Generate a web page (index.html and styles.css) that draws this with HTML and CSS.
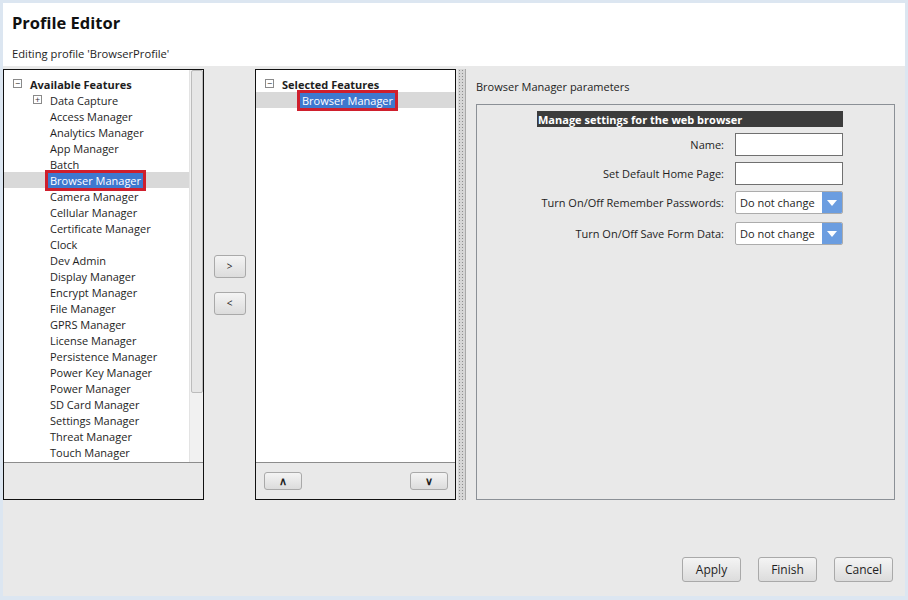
FILE: index.html
```html
<!DOCTYPE html>
<html lang="en">
<head>
    <meta charset="UTF-8">
    <title>Profile Editor</title>
    <link rel="stylesheet" href="styles.css">
</head>
<body>

    <div class="window">
        <header class="editor-header">
            <h1>Profile Editor</h1>
            <p>Editing profile 'BrowserProfile'</p>
        </header>

        <main class="editor-body">
            <div class="panes">

                <section class="tree-pane">
                    <div class="tree-area">
                        <ul class="tree">
                            <li class="tree-root"><span class="toggle">&minus;</span>Available Features</li>
                            <li class="tree-item has-children"><span class="toggle">+</span>Data Capture</li>
                            <li class="tree-item">Access Manager</li>
                            <li class="tree-item">Analytics Manager</li>
                            <li class="tree-item">App Manager</li>
                            <li class="tree-item">Batch</li>
                            <li class="tree-item selected"><span class="hilite">Browser Manager</span></li>
                            <li class="tree-item">Camera Manager</li>
                            <li class="tree-item">Cellular Manager</li>
                            <li class="tree-item">Certificate Manager</li>
                            <li class="tree-item">Clock</li>
                            <li class="tree-item">Dev Admin</li>
                            <li class="tree-item">Display Manager</li>
                            <li class="tree-item">Encrypt Manager</li>
                            <li class="tree-item">File Manager</li>
                            <li class="tree-item">GPRS Manager</li>
                            <li class="tree-item">License Manager</li>
                            <li class="tree-item">Persistence Manager</li>
                            <li class="tree-item">Power Key Manager</li>
                            <li class="tree-item">Power Manager</li>
                            <li class="tree-item">SD Card Manager</li>
                            <li class="tree-item">Settings Manager</li>
                            <li class="tree-item">Threat Manager</li>
                            <li class="tree-item">Touch Manager</li>
                        </ul>
                        <div class="scrollbar"><div class="scroll-thumb"></div></div>
                    </div>
                    <div class="tree-footer"></div>
                </section>

                <div class="move-buttons">
                    <button class="btn move-btn">&gt;</button>
                    <button class="btn move-btn">&lt;</button>
                </div>

                <section class="tree-pane">
                    <div class="tree-area">
                        <ul class="tree">
                            <li class="tree-root"><span class="toggle">&minus;</span>Selected Features</li>
                            <li class="tree-item selected"><span class="hilite">Browser Manager</span></li>
                        </ul>
                    </div>
                    <div class="tree-footer order-bar">
                        <button class="btn order-btn">&and;</button>
                        <button class="btn order-btn">&or;</button>
                    </div>
                </section>

                <div class="splitter"></div>

                <section class="params">
                    <div class="params-title">Browser Manager parameters</div>
                    <div class="group-box">
                        <div class="param-form">
                            <div class="form-heading">Manage settings for the web browser</div>
                            <div class="form-row">
                                <label>Name:</label>
                                <input type="text" class="text-input">
                            </div>
                            <div class="form-row">
                                <label>Set Default Home Page:</label>
                                <input type="text" class="text-input">
                            </div>
                            <div class="form-row">
                                <label>Turn On/Off Remember Passwords:</label>
                                <div class="combo"><span>Do not change</span><span class="combo-arrow"></span></div>
                            </div>
                            <div class="form-row spaced">
                                <label>Turn On/Off Save Form Data:</label>
                                <div class="combo"><span>Do not change</span><span class="combo-arrow"></span></div>
                            </div>
                        </div>
                    </div>
                </section>

            </div>

            <footer class="actions">
                <button class="btn action-btn">Apply</button>
                <button class="btn action-btn">Finish</button>
                <button class="btn action-btn">Cancel</button>
            </footer>
        </main>
    </div>

</body>
</html>
```

FILE: styles.css
```css
body {
    margin: 0;
    background-color: #dce6f1;
    font-family: 'Open Sans', 'Noto Sans', sans-serif;
    font-size: 11px;
    color: #1e1e1e;
}

.window {
    margin: 3px 3px 4px 3px;
    height: 593px;
    display: flex;
    flex-direction: column;
}

.editor-header {
    background-color: #fff;
    height: 63px;
    padding-left: 9px;
    box-sizing: border-box;
}

.editor-header h1 {
    margin: 0;
    padding-top: 9px;
    font-size: 16.5px;
    line-height: 22px;
    font-weight: bold;
    color: #111;
}

.editor-header p {
    margin: 0;
    padding-top: 12px;
    line-height: 16px;
    font-size: 11.2px;
}

.editor-body {
    flex: 1;
    background-color: #e9e9e9;
}

.panes {
    display: flex;
    padding-top: 3px;
    height: 431px;
}

/* feature trees */

.tree-pane {
    width: 201px;
    border: 1px solid #111;
    box-sizing: border-box;
    display: flex;
    flex-direction: column;
    background-color: #e9e9e9;
}

.tree-area {
    height: 392px;
    background-color: #fff;
    border-bottom: 1px solid #8c8c8c;
    display: flex;
}

.tree {
    list-style-type: none;
    margin: 0;
    padding: 6px 0 0 0;
    flex: 1;
    overflow: hidden;
}

.tree li {
    height: 16px;
    line-height: 17px;
    white-space: nowrap;
    position: relative;
}

.tree-root {
    padding-left: 26px;
    font-weight: bold;
}

.tree-item {
    padding-left: 46px;
}

.toggle {
    position: absolute;
    top: 3px;
    width: 7px;
    height: 7px;
    border: 1px solid #8a8a8a;
    font-size: 9px;
    line-height: 7px;
    text-align: center;
    font-weight: normal;
    color: #333;
}

.tree-root .toggle {
    left: 9px;
}

.has-children .toggle {
    left: 29px;
}

.tree-item.selected {
    background-color: #d9d9d9;
}

.hilite {
    background-color: #3e78cf;
    color: #fff;
    margin-left: -2px;
    padding: 0 2px;
    outline: 3px solid #cf1f2d;
}

.scrollbar {
    width: 12px;
    background-color: #f1f1f1;
    border-left: 1px solid #e3e3e3;
    padding: 0 0 0 1px;
}

.scroll-thumb {
    height: 323px;
    background-color: #e6e6e6;
    border: 1px solid #bcbcbc;
    border-radius: 2px;
    box-sizing: border-box;
}

.tree-footer {
    flex: 1;
}

.order-bar {
    display: flex;
    justify-content: space-between;
    padding: 9px 7px 0 8px;
}

/* buttons */

.btn {
    font-family: 'Open Sans', 'Noto Sans', sans-serif;
    font-size: 11px;
    color: #1e1e1e;
    background: linear-gradient(#f4f4f4, #dcdcdc);
    border: 1px solid #a9a9a9;
    border-radius: 3px;
    padding: 0;
    cursor: pointer;
}

.move-buttons {
    width: 51px;
    display: flex;
    flex-direction: column;
    align-items: center;
    justify-content: center;
    gap: 14px;
}

.move-btn {
    width: 32px;
    height: 23px;
    font-size: 10px;
}

.order-btn {
    width: 38px;
    height: 18px;
    font-size: 11px;
    font-weight: bold;
    line-height: 14px;
}

.splitter {
    width: 7px;
    margin-left: 2px;
    border-right: 1px solid #a9a9a9;
    background-color: #d6d6d6;
    background-image: radial-gradient(#8d8d8d 0.7px, transparent 1px);
    background-size: 3px 3px;
}

/* parameters */

.params {
    flex: 1;
    padding: 0 10px 0 10px;
    display: flex;
    flex-direction: column;
}

.params-title {
    height: 35px;
    line-height: 36px;
}

.group-box {
    flex: 1;
    border: 1px solid #8b9096;
}

.param-form {
    width: 306px;
    margin: 6px 0 0 60px;
    display: flex;
    flex-direction: column;
    gap: 6px;
}

.form-heading {
    background-color: #3c3c3c;
    color: #fff;
    font-weight: bold;
    height: 16px;
    line-height: 17px;
    padding-left: 1px;
}

.form-row {
    display: flex;
    align-items: center;
    gap: 11px;
    height: 23px;
}

.form-row.spaced {
    margin-top: 2px;
}

.form-row label {
    width: 187px;
    text-align: right;
    white-space: nowrap;
}

.text-input {
    width: 108px;
    height: 23px;
    box-sizing: border-box;
    border: 1px solid #707070;
    background-color: #fff;
    margin: 0;
}

.combo {
    width: 108px;
    height: 23px;
    box-sizing: border-box;
    display: flex;
    align-items: center;
    justify-content: space-between;
    background-color: #fff;
    border: 1px solid #acacac;
    border-radius: 2px;
    padding-left: 4px;
    overflow: hidden;
}

.combo-arrow {
    width: 20px;
    height: 100%;
    background-color: #6b9de0;
    display: flex;
    align-items: center;
    justify-content: center;
}

.combo-arrow::after {
    content: "";
    border-left: 5px solid transparent;
    border-right: 5px solid transparent;
    border-top: 6px solid #fff;
}

/* bottom actions */

.actions {
    display: flex;
    justify-content: flex-end;
    gap: 17px;
    padding: 57px 12px 0 0;
}

.action-btn {
    width: 59px;
    height: 25px;
    font-size: 12px;
}
```
